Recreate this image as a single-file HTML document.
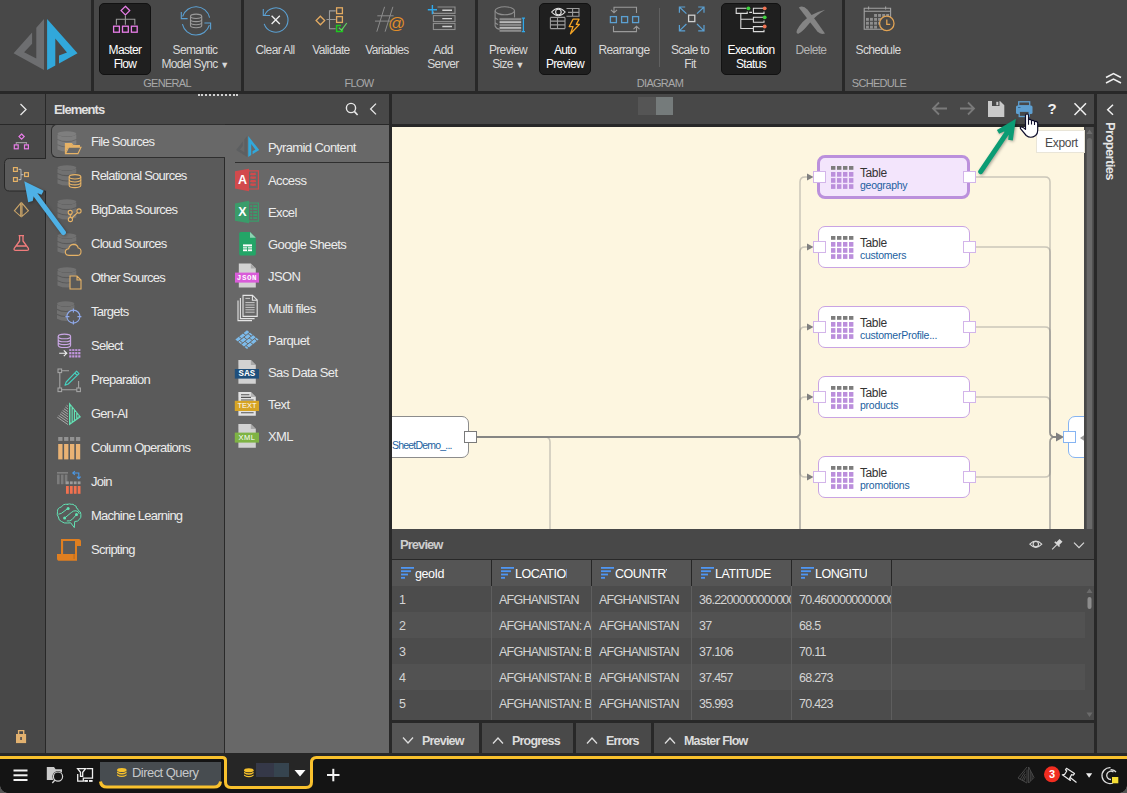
<!DOCTYPE html>
<html lang="en">
<head>
<meta charset="utf-8">
<title>Data Flow</title>
<style>
*{box-sizing:border-box;margin:0;padding:0}
html,body{width:1127px;height:793px;overflow:hidden;background:#484848}
body{font-family:"Liberation Sans",sans-serif;font-size:12px;color:#e4e4e4;position:relative}
.abs{position:absolute}
svg{position:absolute;overflow:visible}
/* ribbon */
#ribbon{position:absolute;left:0;top:0;width:1127px;height:91px;background:#484848}
#ribbon-border{position:absolute;left:0;top:91px;width:1127px;height:3px;background:#282828}
.rsep{position:absolute;top:0;width:3px;height:91px;background:#282828}
.rbtn{position:absolute;top:3px;height:72px;text-align:center;font-size:12px;line-height:14.3px;color:#d8d8d8;letter-spacing:-0.65px}
.rbtn .lbl{position:absolute;left:-20px;right:-20px;top:40px;white-space:nowrap}
.rbtn.on{background:#1f1f1f;border:1px solid #121212;border-radius:5px;color:#fff}
.rbtn.on .lbl{top:39px}
.glabel{position:absolute;top:76px;font-size:11px;line-height:14px;color:#a9a9a9;text-align:center;width:100px;letter-spacing:-0.7px}
.eitem{position:absolute;left:91px;font-size:13px;line-height:18px;color:#ececec;white-space:nowrap;letter-spacing:-0.75px}
.sitem{position:absolute;left:268px;font-size:13px;line-height:18px;color:#ececec;white-space:nowrap;letter-spacing:-0.6px}
.port{position:absolute;width:13px;height:12px;background:#fff;border:1px solid #d3b5ea}
.nt{position:absolute;margin-top:2px;font-size:12px;line-height:14px;color:#333;letter-spacing:-0.4px;white-space:nowrap}
.ns{position:absolute;margin-top:0.5px;font-size:10.5px;line-height:12px;color:#1c5fa0;letter-spacing:-0.25px;white-space:nowrap}
.gh{position:absolute;top:6px;font-size:12.5px;line-height:16px;color:#fff;white-space:nowrap;overflow:hidden;letter-spacing:-0.45px}
.gc{position:absolute;font-size:12.5px;line-height:28px;height:26px;color:#d4d4d4;white-space:nowrap;overflow:hidden;letter-spacing:-0.75px}
.tab{position:absolute;top:723px;height:30px;background:#494949;font-size:12.5px;font-weight:bold;color:#dcdcdc;letter-spacing:-0.8px}
.tab span{position:absolute;top:10px;line-height:16px;white-space:nowrap}
.lbl2{position:absolute;height:10px;line-height:10px;font-size:7.5px;font-weight:bold;color:#fff;text-align:center;font-family:"Liberation Mono",monospace}
</style>
</head>
<body>
<div id="ribbon"></div>
<div id="ribbon-border"></div>
<!-- logo -->
<svg style="left:0;top:0" width="91" height="91" viewBox="0 0 91 91">
  <polygon points="44,19.1 36.3,27.7 36.3,58.5 24.1,52.2 32.1,43.7 32.1,32.5 13.6,53.3 44,70.1" fill="#6d6e70"/>
  <polygon points="47.1,19.1 77.5,53.3 59,63.6 59,55.6 67,52.4 55.3,38.6 55.3,65.6 47.1,70.1" fill="#31a8db"/>
</svg>
<div class="rsep" style="left:91px"></div>
<div class="rsep" style="left:241px"></div>
<div class="rsep" style="left:475px"></div>
<div class="rsep" style="left:842px"></div>
<div class="abs" style="left:659px;top:8px;width:1px;height:59px;background:#606060"></div>

<div class="rbtn on" style="left:99px;width:52px"><div class="lbl">Master<br>Flow</div></div>
<div class="rbtn" style="left:160px;width:70px"><div class="lbl">Semantic<br>Model Sync <span style="font-size:9px">&#9660;</span></div></div>
<div class="rbtn" style="left:250px;width:50px"><div class="lbl">Clear All</div></div>
<div class="rbtn" style="left:306px;width:50px"><div class="lbl">Validate</div></div>
<div class="rbtn" style="left:362px;width:50px"><div class="lbl">Variables</div></div>
<div class="rbtn" style="left:418px;width:50px"><div class="lbl">Add<br>Server</div></div>
<div class="rbtn" style="left:483px;width:50px"><div class="lbl">Preview<br>Size <span style="font-size:9px">&#9660;</span></div></div>
<div class="rbtn on" style="left:539px;width:52px"><div class="lbl">Auto<br>Preview</div></div>
<div class="rbtn" style="left:599px;width:50px"><div class="lbl">Rearrange</div></div>
<div class="rbtn" style="left:665px;width:50px"><div class="lbl">Scale to<br>Fit</div></div>
<div class="rbtn on" style="left:721px;width:60px"><div class="lbl">Execution<br>Status</div></div>
<div class="rbtn" style="left:786px;width:50px;color:#b4b4b4"><div class="lbl">Delete</div></div>
<div class="rbtn" style="left:853px;width:50px"><div class="lbl">Schedule</div></div>

<div class="glabel" style="left:117px">GENERAL</div>
<div class="glabel" style="left:309px">FLOW</div>
<div class="glabel" style="left:610px">DIAGRAM</div>
<div class="glabel" style="left:829px">SCHEDULE</div>
<svg style="left:0;top:0" width="1127" height="91" fill="none" stroke-width="1.1">
<!-- master flow -->
<g stroke="#9a9a9a"><path d="M125.4 15.5 V24.8 M116.4 24.8 V19.3 H134.8 V24.8"/></g>
<g stroke="#e87de8" stroke-width="1.3"><path d="M125.4 6.3 L129.7 10.6 L125.4 14.9 L121.1 10.6 Z"/><rect x="113.6" y="26.2" width="5.8" height="6"/><rect x="122.5" y="26.2" width="5.8" height="6"/><rect x="131.4" y="26.2" width="5.8" height="6"/></g>
<!-- semantic sync -->
<g stroke="#5ba0d2"><path d="M182.6 16.5 A14 14 0 0 1 209.6 17.6"/><path d="M209.4 25.2 A14 14 0 0 1 182.4 24.2"/><path d="M181.3 12 V18.6 H187.6"/><path d="M204.4 23 H210.6 V29.6"/></g>
<g stroke="#9a9a9a"><ellipse cx="196.1" cy="16.3" rx="5.6" ry="2.2"/><path d="M190.5 16.3 V25.6 A5.6 2.2 0 0 0 201.7 25.6 V16.3"/><path d="M190.5 19.4 A5.6 2.2 0 0 0 201.7 19.4 M190.5 22.5 A5.6 2.2 0 0 0 201.7 22.5"/></g>
<!-- clear all -->
<g stroke="#5ba0d2"><path d="M264.6 15.2 A12.2 12.2 0 1 1 264.2 23.8"/><path d="M263.3 9 V15.5 H270"/></g>
<path d="M271.6 15.8 L279.8 24 M279.8 15.8 L271.6 24" stroke="#f0f0f0" stroke-width="1.3"/>
<!-- validate -->
<g stroke="#9a9a9a"><path d="M326.5 19.5 H335.7 M335.7 10.9 H329.5 V28.8 H335.7"/></g>
<g stroke="#e2aa62" stroke-width="1.3"><path d="M320.4 16.2 L324.7 20.5 L320.4 24.8 L316.1 20.5 Z"/><rect x="336.6" y="7.8" width="5.8" height="5.8"/><rect x="336.6" y="16.6" width="5.8" height="5.8"/></g>
<path d="M342.4 28 V31.4 H336.6 V25.6 H341" stroke="#1fc71f" stroke-width="1.5"/><path d="M338.8 27.8 L341.6 30.2 L346.8 23" stroke="#62cf62" stroke-width="1.2"/>
<!-- variables -->
<g stroke="#8c8c8c" stroke-width="1"><path d="M384.6 6.8 L376.8 31.7 M392.9 6.8 L385.1 31.7 M377.3 15.8 H393.6 M375 21.1 H391.3"/></g>
<!-- add server -->
<g stroke="#8e8e8e"><path d="M437.5 7 H455 V13.4 H433.4 V11.5"/><rect x="433.4" y="15.6" width="21.6" height="6"/><rect x="433.4" y="23.5" width="21.6" height="6"/></g>
<g stroke="#cfcfcf" stroke-width="1.4"><path d="M442.3 10.3 H452 M442.3 18.6 H452 M442.3 26.5 H452"/></g>
<path d="M427.8 9.7 H437 M432.4 5 V14.3" stroke="#2fa8ea" stroke-width="1.4"/>
<!-- preview size -->
<g stroke="#8e8e8e"><ellipse cx="504.8" cy="10.8" rx="9.7" ry="4"/><path d="M495.1 10.8 V26 Q496 28.6 500 29.4 M514.5 10.8 V17.5 M495.1 17.5 q1 1.5 3 2 M495.1 22.5 q1 1.5 3 2"/></g>
<rect x="499.6" y="17.8" width="21.6" height="14.2" fill="#5e5e5e"/>
<g stroke="none"><rect x="499.6" y="18.3" width="21.6" height="1.8" fill="#8c8c8c"/><rect x="499.6" y="21.2" width="21.6" height="1.8" fill="#b9b9b9"/><rect x="499.6" y="24.1" width="21.6" height="1.8" fill="#8c8c8c"/><rect x="499.6" y="27" width="21.6" height="1.8" fill="#b9b9b9"/><rect x="499.6" y="29.9" width="21.6" height="1.8" fill="#8c8c8c"/></g>
<path d="M523.4 18.2 V31.6 M521.8 18.2 H525 M521.8 31.6 H525" stroke="#2fa8ea" stroke-width="1.3"/>
<!-- auto preview -->
<g stroke="#9c9c9c"><path d="M566.5 8.5 H579 V16.3 H566.5 M572.6 8.5 V16.3 M568 12.4 H579"/><path d="M550.4 17.4 H565 M550.4 21.1 H565 M550.4 24.9 H565 M550.4 28.6 H565 M550.4 17.4 V28.6 M557.5 17.4 V28.6 M565 17.4 V28.6"/></g>
<g stroke="#e0e0e0"><path d="M551.6 12 Q558.4 4.6 565.2 12 Q558.4 19.4 551.6 12 Z" fill="#1f1f1f"/><circle cx="558.4" cy="12" r="2.8"/></g>
<path d="M573 19.2 H579 L576.3 24.4 H579.4 L570.5 33.8 L573 26.6 H569.2 Z" stroke="#f2a324" stroke-width="1.3" fill="#1f1f1f" stroke-linejoin="round"/>
<!-- rearrange -->
<g stroke="#5ba0d2" stroke-width="1.3"><rect x="610.4" y="16.6" width="6" height="6"/><rect x="621.6" y="16.6" width="6" height="6"/><rect x="632.6" y="16.6" width="6" height="6"/></g>
<g stroke="#9a9a9a"><path d="M636.5 13 V7.3 H614 V12.6 M611 9.8 L614 12.8 L617 9.8"/><path d="M613.5 26 V31.6 H636.5 V26.4 M633.5 29.2 L636.5 26.2 L639.5 29.2"/></g>
<!-- scale to fit -->
<rect x="688.6" y="15.2" width="6.2" height="6.4" stroke="#cfcfcf" stroke-width="1.3"/>
<g stroke="#5ba0d2" stroke-width="1.2"><path d="M679.4 12.8 V7 H685.2 M679.6 7.2 L686.4 13.6"/><path d="M704 12.8 V7 H698.2 M703.8 7.2 L697 13.6"/><path d="M679.4 25 V30.8 H685.2 M679.6 30.6 L686.4 24"/><path d="M704 25 V30.8 H698.2 M703.8 30.6 L697 24"/></g>
<!-- execution status -->
<g stroke="#dadada"><path d="M746.4 8.2 H736.2 V13.4 H747.2 V11.6 M749.2 12.4 H752 M763 8.2 H753.4 V13.4 H764 V11.6 M740.8 13.4 V28.5 H753.4 M740.8 19.3 H753.4 M763 17.3 H753.4 V22.3 H764 V20.6 M763 26.6 H753.4 V31.6 H764 V29.8"/></g>
<g stroke="none"><circle cx="748.4" cy="8.3" r="1.9" fill="#3ed23e"/><circle cx="764.7" cy="8.3" r="1.9" fill="#f07252"/><circle cx="764.7" cy="17.3" r="1.9" fill="#3ed23e"/><circle cx="764.7" cy="26.5" r="1.9" fill="#f07252"/></g>
<!-- delete -->
<g fill="#848484" stroke="none"><path d="M798.8 7.4 Q803 4.6 807.4 9.6 Q816 20.6 825 33.4 Q820.6 35 817.4 31.4 Q808 19.6 798.8 7.4 Z"/><path d="M825.2 9.8 Q815.6 15.6 808.4 24.4 Q802.6 31.6 798.4 33.8 Q795.6 33.8 797 30 Q802 20.6 811.6 15 Q818 11.6 825.2 9.8 Z"/></g>
<!-- schedule -->
<g stroke="#a2a2a2"><path d="M864.2 8.2 H890.6 V29.3 H864.2 Z M864.2 11.2 H890.6 M868.6 6.4 V9.6 M885.6 6.4 V9.6"/></g>
<g fill="#8e8e8e" stroke="none"><rect x="874.1" y="14.0" width="2.9" height="2.9"/><rect x="878.1" y="14.0" width="2.9" height="2.9"/><rect x="882.2" y="14.0" width="2.9" height="2.9"/><rect x="886.2" y="14.0" width="2.9" height="2.9"/><rect x="866.0" y="17.9" width="2.9" height="2.9"/><rect x="870.0" y="17.9" width="2.9" height="2.9"/><rect x="874.1" y="17.9" width="2.9" height="2.9"/><rect x="878.1" y="17.9" width="2.9" height="2.9"/><rect x="882.2" y="17.9" width="2.9" height="2.9"/><rect x="886.2" y="17.9" width="2.9" height="2.9"/><rect x="866.0" y="21.8" width="2.9" height="2.9"/><rect x="870.0" y="21.8" width="2.9" height="2.9"/><rect x="874.1" y="21.8" width="2.9" height="2.9"/><rect x="878.1" y="21.8" width="2.9" height="2.9"/><rect x="866.0" y="25.7" width="2.9" height="2.9"/><rect x="870.0" y="25.7" width="2.9" height="2.9"/><rect x="874.1" y="25.7" width="2.9" height="2.9"/></g>
<circle cx="886.8" cy="23.4" r="7.2" fill="#484848" stroke="#e0a254" stroke-width="1.3"/><path d="M886.8 19.4 V24.3 H890.2" stroke="#e0a254" stroke-width="1.3"/>
</svg>
<div class="abs" style="left:388px;top:14px;font-size:17px;line-height:20px;color:#e08d2a">@</div>
<div class="abs" style="left:198px;top:94px;width:40px;height:0;border-top:2px dotted #d4d4d4;z-index:2"></div>


<!-- LEFT STRIP -->
<div class="abs" style="left:0;top:94px;width:45px;height:659px;background:#484848"></div>
<div class="abs" style="left:45px;top:94px;width:1px;height:659px;background:#282828"></div>
<div class="abs" style="left:0;top:124px;width:46px;height:1px;background:#282828"></div>
<!-- ELEMENTS PANEL -->
<div class="abs" style="left:46px;top:94px;width:343px;height:30px;background:#484848"></div>
<div class="abs" style="left:46px;top:124px;width:343px;height:1px;background:#282828"></div>
<div class="abs" style="left:46px;top:125px;width:179px;height:628px;background:#5a5a5a"></div>
<div class="abs" style="left:224px;top:157px;width:1px;height:596px;background:#2a2a2a"></div>
<div class="abs" style="left:225px;top:125px;width:164px;height:628px;background:#686868"></div>
<div class="abs" style="left:389px;top:94px;width:3px;height:659px;background:#282828"></div>
<div class="abs" style="left:54px;top:102px;font-size:13px;line-height:16px;font-weight:bold;color:#e0e0e0;letter-spacing:-0.95px">Elements</div>
<div class="abs" style="left:51px;top:124px;width:174px;height:34px;background:#686868;border:1px solid #2f2f2f;border-right:none;border-radius:6px 0 0 6px"></div>
<div class="eitem" style="top:133px">File Sources</div>
<div class="eitem" style="top:167px">Relational Sources</div>
<div class="eitem" style="top:201px">BigData Sources</div>
<div class="eitem" style="top:235px">Cloud Sources</div>
<div class="eitem" style="top:269px">Other Sources</div>
<div class="eitem" style="top:303px">Targets</div>
<div class="eitem" style="top:337px">Select</div>
<div class="eitem" style="top:371px">Preparation</div>
<div class="eitem" style="top:405px">Gen-AI</div>
<div class="eitem" style="top:439px">Column Operations</div>
<div class="eitem" style="top:473px">Join</div>
<div class="eitem" style="top:507px">Machine Learning</div>
<div class="eitem" style="top:541px">Scripting</div>
<div class="sitem" style="top:139px">Pyramid Content</div>
<div class="sitem" style="top:172px">Access</div>
<div class="sitem" style="top:204px">Excel</div>
<div class="sitem" style="top:236px">Google Sheets</div>
<div class="sitem" style="top:268px">JSON</div>
<div class="sitem" style="top:300px">Multi files</div>
<div class="sitem" style="top:332px">Parquet</div>
<div class="sitem" style="top:364px">Sas Data Set</div>
<div class="sitem" style="top:396px">Text</div>
<div class="sitem" style="top:428px">XML</div>
<div class="abs" style="left:235px;top:162px;width:154px;height:1px;background:#2f2f2f"></div>
<svg style="left:0;top:0" width="400" height="760" fill="none" stroke-width="1.1">
<path d="M46 158.5 H9.5 Q4.5 158.5 4.5 163.5 V186 Q4.5 191 9.5 191 H46" fill="#5a5a5a" stroke="#282828" stroke-width="1"/>
<rect x="45" y="159" width="2" height="31.5" fill="#5a5a5a"/>
<path d="M20.5 104 L26 109.5 L20.5 115" stroke="#e8e8e8" stroke-width="1.3"/>
<g stroke="#9a9a9a"><path d="M16.3 144.6 V142.6 H26.5 V144.6"/></g><g stroke="#e87de8" stroke-width="1.2"><path d="M21.6 134 L24.2 136.6 L21.6 139.2 L19 136.6 Z"/><rect x="14.3" y="144.9" width="3.9" height="3.9"/><rect x="24.5" y="144.9" width="3.9" height="3.9"/></g>
<g stroke="#b0b0b0"><path d="M18.6 169.4 H20.4 Q21 169.4 21 170 V179 Q21 179.6 20.4 179.6 H18.6 M21 174.6 H23.4"/></g><g stroke="#e6b266" stroke-width="1.2"><rect x="13.5" y="167.6" width="3.8" height="3.8"/><rect x="13.5" y="177.6" width="3.8" height="3.8"/><rect x="24.6" y="172.7" width="3.8" height="3.8"/></g>
<g stroke="#caa468" stroke-width="1.1"><path d="M20.7 203.2 L14.4 210.8 L20.7 216.4 Z M22 203.2 L28.4 210.8 L22 216.4 Z"/></g>
<g stroke="#f07c7c" stroke-width="1.3" stroke-linejoin="round"><path d="M18.6 235.6 H24 M19.6 235.8 V241 L14.2 248.4 Q13.6 250.4 15.6 250.4 H27 Q29 250.4 28.4 248.4 L23 241 V235.8 M16.4 246 H26.2"/></g>
<rect x="16" y="734" width="10.1" height="9.1" fill="#e2b16f"/><path d="M18.6 734 V730.6 H23.7 V734" stroke="#e2b16f" stroke-width="1.4"/><rect x="20.3" y="737" width="1.5" height="3" fill="#40444c"/>
<circle cx="351" cy="108" r="4.6" stroke="#e8e8e8" stroke-width="1.4"/><path d="M354.3 111.4 L357.6 115" stroke="#e8e8e8" stroke-width="1.6"/><path d="M376 103.6 L370.6 109 L376 114.4" stroke="#e8e8e8" stroke-width="1.3"/>
<g fill="#7e7e7e" stroke="none"><ellipse cx="66.9" cy="133.8" rx="9.4" ry="2.6"/><path d="M57.5 134.8 q9.4 4.4 18.8 0 v4.1 q-9.4 4.4 -18.8 0 Z"/><path d="M57.5 140.1 q9.4 4.4 18.8 0 v4.1 q-9.4 4.4 -18.8 0 Z"/><path d="M57.5 145.3 q9.4 4.4 18.8 0 v4.1 q-9.4 4.4 -18.8 0 Z"/></g>
<g fill="#717171" stroke="none"><ellipse cx="66.9" cy="167.8" rx="9.4" ry="2.6"/><path d="M57.5 168.8 q9.4 4.4 18.8 0 v4.1 q-9.4 4.4 -18.8 0 Z"/><path d="M57.5 174.1 q9.4 4.4 18.8 0 v4.1 q-9.4 4.4 -18.8 0 Z"/><path d="M57.5 179.3 q9.4 4.4 18.8 0 v4.1 q-9.4 4.4 -18.8 0 Z"/></g>
<g fill="#717171" stroke="none"><ellipse cx="66.9" cy="201.8" rx="9.4" ry="2.6"/><path d="M57.5 202.8 q9.4 4.4 18.8 0 v4.1 q-9.4 4.4 -18.8 0 Z"/><path d="M57.5 208.1 q9.4 4.4 18.8 0 v4.1 q-9.4 4.4 -18.8 0 Z"/><path d="M57.5 213.3 q9.4 4.4 18.8 0 v4.1 q-9.4 4.4 -18.8 0 Z"/></g>
<g fill="#717171" stroke="none"><ellipse cx="66.9" cy="235.8" rx="9.4" ry="2.6"/><path d="M57.5 236.8 q9.4 4.4 18.8 0 v4.1 q-9.4 4.4 -18.8 0 Z"/><path d="M57.5 242.1 q9.4 4.4 18.8 0 v4.1 q-9.4 4.4 -18.8 0 Z"/><path d="M57.5 247.3 q9.4 4.4 18.8 0 v4.1 q-9.4 4.4 -18.8 0 Z"/></g>
<g fill="#717171" stroke="none"><ellipse cx="66.9" cy="269.8" rx="9.4" ry="2.6"/><path d="M57.5 270.8 q9.4 4.4 18.8 0 v4.1 q-9.4 4.4 -18.8 0 Z"/><path d="M57.5 276.1 q9.4 4.4 18.8 0 v4.1 q-9.4 4.4 -18.8 0 Z"/><path d="M57.5 281.3 q9.4 4.4 18.8 0 v4.1 q-9.4 4.4 -18.8 0 Z"/></g>
<g fill="#717171" stroke="none"><ellipse cx="65.7" cy="303.8" rx="8.7" ry="2.6"/><path d="M57.0 304.8 q8.7 4.4 17.4 0 v3.9 q-8.7 4.4 -17.4 0 Z"/><path d="M57.0 309.9 q8.7 4.4 17.4 0 v3.9 q-8.7 4.4 -17.4 0 Z"/><path d="M57.0 314.9 q8.7 4.4 17.4 0 v3.9 q-8.7 4.4 -17.4 0 Z"/></g>
<path d="M65.4 153.6 V143.6 H71.6 L73.2 145.6 H79.4 V147.3" stroke="#e6b266"/><path d="M65.6 153.6 L68.6 147.3 H81 L78 153.6 Z" stroke="#e6b266" fill="#686868"/><path d="M65.4 144 H71.5 L73 146 H79 V147 H68.3 L65.4 152.6 Z" fill="#e6b266" stroke="none"/>
<g stroke="#e6b266" fill="#5a5a5a"><path d="M69.2 176.8 V185.4 A5.8 2.2 0 0 0 80.8 185.4 V176.8"/><ellipse cx="75" cy="176.8" rx="5.8" ry="2.2"/><path d="M69.2 179.8 A5.8 2.2 0 0 0 80.8 179.8 M69.2 182.7 A5.8 2.2 0 0 0 80.8 182.7" fill="none"/></g>
<g stroke="#e6b266" fill="#5a5a5a"><path d="M70.3 217.2 V214.6 M72 218 L77.4 212.6"/><circle cx="70.2" cy="212.4" r="2"/><circle cx="79" cy="211" r="2.1"/><circle cx="70.4" cy="219.5" r="2.1"/></g>
<path d="M69 255.4 Q65.2 255.2 65.3 251.8 Q65.6 249 68.6 248.8 Q69.6 244.4 73.8 244.4 Q77.4 244.6 78.2 248 Q81.2 248.4 81 252 Q80.8 255.2 77.6 255.4 Z" stroke="#e6b266" fill="#5a5a5a"/>
<path d="M70 276 H77 L81 280 V289 H70 Z M77 276 V280 H81" stroke="#e6b266" fill="#5a5a5a"/>
<g stroke="#8fa9ea" fill="#5a5a5a"><circle cx="73.4" cy="316.6" r="6.5"/><path d="M73.4 308.6 V312.6 M73.4 320.6 V324.6 M65.4 316.6 H69.4 M77.4 316.6 H81.4" fill="none"/></g>
<g stroke="#c9a6e4"><ellipse cx="64.4" cy="336.4" rx="6.2" ry="2.3"/><path d="M58.2 336.4 V345.2 A6.2 2.3 0 0 0 70.6 345.2 V336.4 M58.2 339.4 A6.2 2.3 0 0 0 70.6 339.4 M58.2 342.3 A6.2 2.3 0 0 0 70.6 342.3"/></g><path d="M59.2 353.3 H66.6 M63.8 350.4 L66.8 353.3 L63.8 356.2" stroke="#f0f0f0" stroke-width="1.1"/><rect x="69.2" y="349.2" width="2.2" height="1.7" fill="#c597e2"/><rect x="69.2" y="352.1" width="2.2" height="2.2" fill="#c597e2"/><rect x="69.2" y="355.3" width="2.2" height="2.2" fill="#c597e2"/><rect x="72.2" y="349.2" width="2.2" height="1.7" fill="#c597e2"/><rect x="72.2" y="352.1" width="2.2" height="2.2" fill="#c597e2"/><rect x="72.2" y="355.3" width="2.2" height="2.2" fill="#c597e2"/><rect x="75.2" y="349.2" width="2.2" height="1.7" fill="#c597e2"/><rect x="75.2" y="352.1" width="2.2" height="2.2" fill="#c597e2"/><rect x="75.2" y="355.3" width="2.2" height="2.2" fill="#c597e2"/><rect x="78.2" y="349.2" width="2.2" height="1.7" fill="#c597e2"/><rect x="78.2" y="352.1" width="2.2" height="2.2" fill="#c597e2"/><rect x="78.2" y="355.3" width="2.2" height="2.2" fill="#c597e2"/>
<g stroke="#a4a4a4"><path d="M61.6 370.8 H69 M59.8 372.6 V388 M61.6 389.8 H76.8 M78.6 388 V381"/><rect x="58" y="369" width="3.6" height="3.6"/><rect x="58" y="388" width="3.6" height="3.6"/><rect x="76.8" y="388" width="3.6" height="3.6"/></g><g stroke="#45d3c2" stroke-width="1.1" stroke-linejoin="round"><path d="M76.6 371.2 L79 373.6 L68.2 384 L65 385.2 L66.2 382 Z M74.8 373 L77.2 375.4"/></g>
<path d="M57.3 417.2 L68 424.6 M58.6 415.5 L68 422.0 M60.0 413.8 L68 419.4 M61.3 412.1 L68 416.8 M62.6 410.4 L68 414.2 M63.9 408.7 L68 411.6 M65.3 407.0 L68 409.0 M66.6 405.3 L68 406.4 " stroke="#a8a8a8" stroke-width="1"/><path d="M69 402.2 L81 417 L69 425.4 Z" fill="#62e2b4" stroke="none"/><g stroke="#5a5a5a" stroke-width="1.15"><path d="M71 406.4 V422.4 M73.3 409.2 V420.8 M75.6 412 V419.2 M77.9 414.8 V417.6"/></g>
<rect x="58.2" y="437" width="4.3" height="3.9" fill="#929292"/><rect x="58.2" y="444" width="4.3" height="15.4" fill="#e9b274"/><rect x="64.1" y="437" width="4.3" height="3.9" fill="#929292"/><rect x="64.1" y="444" width="4.3" height="15.4" fill="#e9b274"/><rect x="70.0" y="437" width="4.3" height="3.9" fill="#929292"/><rect x="70.0" y="444" width="4.3" height="15.4" fill="#e9b274"/><rect x="75.9" y="437" width="4.3" height="3.9" fill="#929292"/><rect x="75.9" y="444" width="4.3" height="15.4" fill="#e9b274"/>
<rect x="57" y="472.2" width="11" height="1.3" fill="#8a8a8a"/><rect x="57.0" y="474.6" width="2.6" height="9.6" fill="#7c7c7c"/><rect x="60.9" y="474.6" width="2.6" height="9.6" fill="#7c7c7c"/><rect x="64.8" y="474.6" width="2.6" height="9.6" fill="#7c7c7c"/><rect x="66.0" y="481.4" width="2.8" height="2.8" fill="#9c9c9c"/><rect x="66.0" y="486" width="2.8" height="7.8" fill="#f2714f"/><rect x="69.9" y="481.4" width="2.8" height="2.8" fill="#9c9c9c"/><rect x="69.9" y="486" width="2.8" height="7.8" fill="#f2714f"/><rect x="73.8" y="481.4" width="2.8" height="2.8" fill="#9c9c9c"/><rect x="73.8" y="486" width="2.8" height="7.8" fill="#f2714f"/><rect x="77.7" y="481.4" width="2.8" height="2.8" fill="#9c9c9c"/><rect x="77.7" y="486" width="2.8" height="7.8" fill="#f2714f"/><path d="M73 473 H78.8 V478.4 M74.8 471.2 L72.8 473 L74.8 474.8 M77 476.6 L78.8 478.6 L80.6 476.6" stroke="#4a98e6" stroke-width="1.1"/>
<g stroke="#62e2b4" stroke-width="1" stroke-linejoin="round" stroke-linecap="round"><path d="M67.6 504.3 Q63 503.6 61.5 506.9 Q57 508 57.5 511.8 Q56.6 515 58.4 517 Q58.6 520.6 61.5 521.5 Q64 523.6 67.6 523 L70.7 522.8 L74.3 527.6 L74.7 521.5 Q78 521.6 79.1 519.7 Q81.6 517.6 80.9 514.4 Q81 511.4 78.2 510.4 Q78 508 76.5 508.2 Q76.6 505.4 74.7 505.6 Q73 503.6 71.2 504.3 Q69.4 503.4 67.6 504.3 Z"/><path d="M58.8 514.2 Q61.4 514 64 511.4 L68 508.4 M64.6 518.1 L71.2 512.6 Q73.5 510.4 76 510.8 Q78.8 511.2 79.2 513.4 M76.5 514.6 L72 519.6 Q70 521.4 67.2 521"/></g><g fill="#62e2b4"><circle cx="68.1" cy="508.4" r="1.5"/><circle cx="64.6" cy="518.1" r="1.5"/><circle cx="76.5" cy="514.6" r="1.5"/></g>
<path d="M61 539 H78.4 Q81 539 81 541.6 V546 H77 V560.8 H59.6 Q57 560.8 57 558.2 V554.1 H61 Z M63.1 541 V554 H75 V541 Z" fill="#e07f20" fill-rule="evenodd" stroke="none"/><rect x="73.7" y="554" width="0.7" height="5" fill="#a8601c"/>
</svg>
<svg style="left:0;top:0" width="400" height="460" fill="none" stroke-width="1.1">
<g transform="translate(231.2,128.2) scale(0.362,0.41)"><polygon points="44,19.1 36.3,27.7 36.3,58.5 24.1,52.2 32.1,43.7 32.1,32.5 13.6,53.3 44,70.1" fill="#5d5f61"/><polygon points="47.1,19.1 77.5,53.3 59,63.6 59,55.6 67,52.4 55.3,38.6 55.3,65.6 47.1,70.1" fill="#31a8db"/></g>
<path d="M235 171.29999999999998 L249 168.7 V191.2 L235 188.6 Z" fill="#d24a4c"/><path d="M249 170.89999999999998 H258.4 V189.0 H249" stroke="#d24a4c" stroke-width="1.2"/><g stroke="#d24a4c" stroke-width="2.3"><path d="M250.4 173.6 q2.7 1.1 5.4 0 M250.4 177.2 q2.7 1.1 5.4 0 M250.4 180.7 q2.7 1.1 5.4 0 M250.4 184.2 q2.7 1.1 5.4 0 "/></g>
<path d="M235 203.4 L249 200.8 V223.3 L235 220.70000000000002 Z" fill="#3a9c6a"/><path d="M249 203.0 H258.4 V221.10000000000002 H249" stroke="#3a9c6a" stroke-width="1.2"/><g fill="#3a9c6a" stroke="none"><rect x="250.3" y="205.1" width="1.8" height="1.9"/><rect x="253.2" y="205.1" width="3.9" height="1.9"/><rect x="250.3" y="208.1" width="1.8" height="1.9"/><rect x="253.2" y="208.1" width="3.9" height="1.9"/><rect x="250.3" y="211.1" width="1.8" height="1.9"/><rect x="253.2" y="211.1" width="3.9" height="1.9"/><rect x="250.3" y="214.1" width="1.8" height="1.9"/><rect x="253.2" y="214.1" width="3.9" height="1.9"/><rect x="250.3" y="217.1" width="1.8" height="1.9"/><rect x="253.2" y="217.1" width="3.9" height="1.9"/></g>
<path d="M239.2 233.5 Q239.2 232 240.7 232 H250 L255.8 237.8 V254 Q255.8 255.5 254.3 255.5 H240.7 Q239.2 255.5 239.2 254 Z" fill="#23a567"/><path d="M250 232 V237.8 H255.8 Z" fill="#8ed3b3"/><rect x="243" y="244.4" width="9" height="6.8" fill="#fff"/><path d="M243 246.8 H252 M243 248.9 H252 M247.5 246.8 V251.2" stroke="#23a567" stroke-width="0.9"/>
<path d="M238.8 263.4 H250.8 L255.8 268.4 V287.59999999999997 H238.8 Z" fill="#d2d2d2"/><path d="M250.8 263.4 V268.4 H255.8 Z" fill="#a8a8a8"/><rect x="235" y="272.6" width="24" height="10" fill="#d95cd9"/>
<g stroke="#e4e4e4" stroke-width="1.1"><path d="M243 295.4 H252.6 L257.2 300 V316.4 H243 Z M252.4 295.6 V300.2 H257" fill="#686868"/><path d="M240.4 298 V318.6 H254.6 M238 300.6 V320.6 H252"/></g><g stroke="#c8c8c8" stroke-width="1"><path d="M245.4 302.6 H254.6 M245.4 305 H254.6 M245.4 307.4 H254.6 M245.4 309.8 H254.6 M245.4 312.2 H254.6 M245.4 298.4 H250"/></g>
<g transform="translate(247,339.6) scale(1,0.8) rotate(45)"><rect x="-8.2" y="-8.2" width="16.4" height="16.4" fill="#7dbbea"/><g stroke="#686868" stroke-width="1"><path d="M-4.5 -9 V9 M0 -9 V9 M4.5 -9 V9 M-9 -3 H-4.5 M-9 3 H-4.5 M-4.5 -6 H0 M-4.5 0 H0 M-4.5 6 H0 M0 -3 H4.5 M0 3 H4.5 M4.5 -6 H9 M4.5 0 H9 M4.5 6 H9"/></g></g>
<path d="M238.4 360 H250.8 L255.8 365 V383.8 H238.4 Z" fill="#d2d2d2"/><path d="M250.8 360 V365 H255.8 Z" fill="#a8a8a8"/><rect x="234.8" y="369" width="24.2" height="9.6" fill="#1f4f7b"/>
<path d="M238.4 392 H250.8 L255.8 397 V415.8 H238.4 Z" fill="#e2e2e2"/><path d="M250.8 392 V397 H255.8 Z" fill="#b4b4b4"/><g stroke="#555" stroke-width="1.1"><path d="M241 394.8 H249.4 M241 397.4 H251 M241 400 H253.6 M241 412.8 H253.6"/></g><rect x="234.8" y="400.8" width="24.2" height="10.2" fill="#d6a424"/>
<path d="M238.4 424 H250.8 L255.8 429 V447.8 H238.4 Z" fill="#d2d2d2"/><path d="M250.8 424 V429 H255.8 Z" fill="#a8a8a8"/><rect x="234.8" y="432.6" width="24.2" height="10" fill="#7eb344"/>
</svg>
<div class="lbl2" style="left:235px;top:273px;width:24px;letter-spacing:0.6px">JSON</div><div class="lbl2" style="left:235px;top:369.3px;width:24px;font-size:9px;letter-spacing:0.2px">SAS</div><div class="lbl2" style="left:235px;top:401.4px;width:24px;font-size:7.5px;font-weight:normal;letter-spacing:0px;font-family:'Liberation Sans',sans-serif">TEXT</div><div class="lbl2" style="left:235px;top:433px;width:24px;font-size:7.5px;font-weight:normal;letter-spacing:0.5px;font-family:'Liberation Sans',sans-serif">XML</div><div class="abs" style="left:236px;top:171px;width:13px;text-align:center;font-size:12.5px;line-height:18px;font-weight:bold;color:#fff">A</div><div class="abs" style="left:236px;top:203px;width:13px;text-align:center;font-size:12.5px;line-height:18px;font-weight:bold;color:#fff">X</div>


<!-- CANVAS TOOLBAR -->
<div class="abs" style="left:392px;top:94px;width:702px;height:30px;background:#484848"></div>
<div class="abs" style="left:392px;top:124px;width:702px;height:3px;background:#282828;z-index:2"></div>
<svg style="left:0;top:0;z-index:3" width="1127" height="130" fill="none">
<g stroke="#7a7a7a" stroke-width="1.8"><path d="M933 108.5 H947 M939 102.5 L933 108.5 L939 114.5"/><path d="M960 108.5 H974 M968 102.5 L974 108.5 L968 114.5"/></g>
<path d="M988 101 H1000 L1004.3 105.3 V117 H988 Z" fill="#c9c9c9"/><rect x="992" y="101" width="7.5" height="5" fill="#484848"/><rect x="996.3" y="101.8" width="2" height="3.4" fill="#c9c9c9"/>
<g fill="#5e9fd0"><rect x="1016" y="105.5" width="16.5" height="8.5" rx="1.5"/><rect x="1018.7" y="101.8" width="11" height="4" fill="none" stroke="#5e9fd0" stroke-width="1.3"/><rect x="1019.2" y="111.2" width="10" height="5.3" fill="#484848" stroke="#5e9fd0" stroke-width="1.3"/></g>
<rect x="1018" y="107" width="2.5" height="1" fill="#3a6a93"/>
<g stroke="#f0f0f0" stroke-width="1.5"><path d="M1074.5 103.3 L1086 115 M1086 103.3 L1074.5 115"/></g>
<g stroke="#f0f0f0" stroke-width="1.5"><path d="M1106 77.5 L1113.5 73.5 L1121 77.5 M1106 83 L1113.5 79 L1121 83"/></g>
<path d="M1113 104.7 L1107.7 109.8 L1113 114.8" stroke="#f0f0f0" stroke-width="1.5"/>
</svg>
<div class="abs" style="left:1047px;top:100px;width:10px;font-size:15px;line-height:17px;font-weight:bold;color:#f0f0f0;text-align:center">?</div>
<div class="abs" style="left:1099px;top:122px;width:22px;height:60px;z-index:3"><div style="position:absolute;left:11px;top:0;transform-origin:0 0;transform:rotate(90deg) translate(0,-50%);font-size:13px;font-weight:bold;color:#e4e4e4;white-space:nowrap;letter-spacing:-0.65px;line-height:16px">Properties</div></div>

<div class="abs" style="left:638px;top:97px;width:18px;height:18px;background:#555"></div>
<div class="abs" style="left:656px;top:97px;width:17px;height:18px;background:#757b7b"></div>
<!-- CANVAS -->
<div id="canvas" class="abs" style="left:392px;top:126px;width:692px;height:403px;background:#fdf6e0;overflow:hidden">
<svg style="left:-392px;top:-126px" width="1127" height="793" fill="none">
<g stroke="#808080" stroke-opacity="0.4" stroke-width="1.5">
<path d="M476 437 H795 Q800 437 800 432 V182 Q800 177 805 177 H808"/>
<path d="M476 437 H795 Q800 437 800 432 V252 Q800 247 805 247 H808"/>
<path d="M476 437 H795 Q800 437 800 432 V332 Q800 327 805 327 H808"/>
<path d="M476 437 H795 Q800 437 800 432 V402 Q800 397 805 397 H808"/>
<path d="M476 437 H795 Q800 437 800 442 V472 Q800 477 805 477 H808"/>
<path d="M476 437 H795 Q800 437 800 442 V540"/>
<path d="M476 437 H795 Q800 437 800 442 V540"/>
<path d="M476 437 H545 Q550 437 550 442 V540"/>
<path d="M976 177 H1045 Q1050 177 1050 182 V432 Q1050 437 1055 437 H1058"/>
<path d="M976 247 H1045 Q1050 247 1050 252 V432 Q1050 437 1055 437 H1058"/>
<path d="M976 327 H1045 Q1050 327 1050 332 V432 Q1050 437 1055 437 H1058"/>
<path d="M976 397 H1045 Q1050 397 1050 402 V432 Q1050 437 1055 437 H1058"/>
<path d="M976 477 H1045 Q1050 477 1050 472 V442 Q1050 437 1055 437 H1058"/>
<path d="M1050 540 V442 Q1050 437 1055 437 H1058"/>
<path d="M1050 540 V442 Q1050 437 1055 437 H1058"/>
</g>
<g fill="#7f7f7f" stroke="none">
<polygon points="807,173.5 813.5,177 807,180.5"/>
<polygon points="807,243.5 813.5,247 807,250.5"/>
<polygon points="807,323.5 813.5,327 807,330.5"/>
<polygon points="807,393.5 813.5,397 807,400.5"/>
<polygon points="807,473.5 813.5,477 807,480.5"/>
<polygon points="1056,432.5 1064,437 1056,441.5"/>
</g>
</svg>
<div class="abs" style="left:-10px;top:290px;width:87px;height:42px;border:1px solid #8c8c8c;border-radius:7px;background:#fff"></div><div class="port" style="left:72px;top:305px;border-color:#7a7a7a"></div><div class="ns" style="left:0px;top:312px;letter-spacing:-0.8px">SheetDemo_...</div>
<div class="abs" style="left:425px;top:29px;width:153px;height:44px;border:3px solid #bb90dc;border-radius:8px;background:#f3e5fc"></div><div class="port" style="left:421px;top:45px"></div><div class="port" style="left:571px;top:45px"></div><svg style="left:-392px;top:-126px" width="10" height="10"><rect x="831" y="166" width="4.4" height="3.8" fill="#7d7d7d"/><rect x="831" y="172.0" width="4.4" height="4.7" fill="#bb8fdc"/><rect x="831" y="178.1" width="4.4" height="4.7" fill="#bb8fdc"/><rect x="831" y="184.2" width="4.4" height="4.7" fill="#bb8fdc"/><rect x="837" y="166" width="4.4" height="3.8" fill="#7d7d7d"/><rect x="837" y="172.0" width="4.4" height="4.7" fill="#bb8fdc"/><rect x="837" y="178.1" width="4.4" height="4.7" fill="#bb8fdc"/><rect x="837" y="184.2" width="4.4" height="4.7" fill="#bb8fdc"/><rect x="843" y="166" width="4.4" height="3.8" fill="#7d7d7d"/><rect x="843" y="172.0" width="4.4" height="4.7" fill="#bb8fdc"/><rect x="843" y="178.1" width="4.4" height="4.7" fill="#bb8fdc"/><rect x="843" y="184.2" width="4.4" height="4.7" fill="#bb8fdc"/><rect x="849" y="166" width="4.4" height="3.8" fill="#7d7d7d"/><rect x="849" y="172.0" width="4.4" height="4.7" fill="#bb8fdc"/><rect x="849" y="178.1" width="4.4" height="4.7" fill="#bb8fdc"/><rect x="849" y="184.2" width="4.4" height="4.7" fill="#bb8fdc"/></svg><div class="nt" style="left:468px;top:38px">Table</div><div class="ns" style="left:468px;top:52px">geography</div>
<div class="abs" style="left:426px;top:100px;width:152px;height:42px;border:1px solid #c9a3e3;border-radius:7px;background:#fff"></div><div class="port" style="left:421px;top:115px"></div><div class="port" style="left:571px;top:115px"></div><svg style="left:-392px;top:-126px" width="10" height="10"><rect x="831" y="236" width="4.4" height="3.8" fill="#7d7d7d"/><rect x="831" y="242.0" width="4.4" height="4.7" fill="#bb8fdc"/><rect x="831" y="248.1" width="4.4" height="4.7" fill="#bb8fdc"/><rect x="831" y="254.2" width="4.4" height="4.7" fill="#bb8fdc"/><rect x="837" y="236" width="4.4" height="3.8" fill="#7d7d7d"/><rect x="837" y="242.0" width="4.4" height="4.7" fill="#bb8fdc"/><rect x="837" y="248.1" width="4.4" height="4.7" fill="#bb8fdc"/><rect x="837" y="254.2" width="4.4" height="4.7" fill="#bb8fdc"/><rect x="843" y="236" width="4.4" height="3.8" fill="#7d7d7d"/><rect x="843" y="242.0" width="4.4" height="4.7" fill="#bb8fdc"/><rect x="843" y="248.1" width="4.4" height="4.7" fill="#bb8fdc"/><rect x="843" y="254.2" width="4.4" height="4.7" fill="#bb8fdc"/><rect x="849" y="236" width="4.4" height="3.8" fill="#7d7d7d"/><rect x="849" y="242.0" width="4.4" height="4.7" fill="#bb8fdc"/><rect x="849" y="248.1" width="4.4" height="4.7" fill="#bb8fdc"/><rect x="849" y="254.2" width="4.4" height="4.7" fill="#bb8fdc"/></svg><div class="nt" style="left:468px;top:108px">Table</div><div class="ns" style="left:468px;top:122px">customers</div>
<div class="abs" style="left:426px;top:180px;width:152px;height:42px;border:1px solid #c9a3e3;border-radius:7px;background:#fff"></div><div class="port" style="left:421px;top:195px"></div><div class="port" style="left:571px;top:195px"></div><svg style="left:-392px;top:-126px" width="10" height="10"><rect x="831" y="316" width="4.4" height="3.8" fill="#7d7d7d"/><rect x="831" y="322.0" width="4.4" height="4.7" fill="#bb8fdc"/><rect x="831" y="328.1" width="4.4" height="4.7" fill="#bb8fdc"/><rect x="831" y="334.2" width="4.4" height="4.7" fill="#bb8fdc"/><rect x="837" y="316" width="4.4" height="3.8" fill="#7d7d7d"/><rect x="837" y="322.0" width="4.4" height="4.7" fill="#bb8fdc"/><rect x="837" y="328.1" width="4.4" height="4.7" fill="#bb8fdc"/><rect x="837" y="334.2" width="4.4" height="4.7" fill="#bb8fdc"/><rect x="843" y="316" width="4.4" height="3.8" fill="#7d7d7d"/><rect x="843" y="322.0" width="4.4" height="4.7" fill="#bb8fdc"/><rect x="843" y="328.1" width="4.4" height="4.7" fill="#bb8fdc"/><rect x="843" y="334.2" width="4.4" height="4.7" fill="#bb8fdc"/><rect x="849" y="316" width="4.4" height="3.8" fill="#7d7d7d"/><rect x="849" y="322.0" width="4.4" height="4.7" fill="#bb8fdc"/><rect x="849" y="328.1" width="4.4" height="4.7" fill="#bb8fdc"/><rect x="849" y="334.2" width="4.4" height="4.7" fill="#bb8fdc"/></svg><div class="nt" style="left:468px;top:188px">Table</div><div class="ns" style="left:468px;top:202px">customerProfile...</div>
<div class="abs" style="left:426px;top:250px;width:152px;height:42px;border:1px solid #c9a3e3;border-radius:7px;background:#fff"></div><div class="port" style="left:421px;top:265px"></div><div class="port" style="left:571px;top:265px"></div><svg style="left:-392px;top:-126px" width="10" height="10"><rect x="831" y="386" width="4.4" height="3.8" fill="#7d7d7d"/><rect x="831" y="392.0" width="4.4" height="4.7" fill="#bb8fdc"/><rect x="831" y="398.1" width="4.4" height="4.7" fill="#bb8fdc"/><rect x="831" y="404.2" width="4.4" height="4.7" fill="#bb8fdc"/><rect x="837" y="386" width="4.4" height="3.8" fill="#7d7d7d"/><rect x="837" y="392.0" width="4.4" height="4.7" fill="#bb8fdc"/><rect x="837" y="398.1" width="4.4" height="4.7" fill="#bb8fdc"/><rect x="837" y="404.2" width="4.4" height="4.7" fill="#bb8fdc"/><rect x="843" y="386" width="4.4" height="3.8" fill="#7d7d7d"/><rect x="843" y="392.0" width="4.4" height="4.7" fill="#bb8fdc"/><rect x="843" y="398.1" width="4.4" height="4.7" fill="#bb8fdc"/><rect x="843" y="404.2" width="4.4" height="4.7" fill="#bb8fdc"/><rect x="849" y="386" width="4.4" height="3.8" fill="#7d7d7d"/><rect x="849" y="392.0" width="4.4" height="4.7" fill="#bb8fdc"/><rect x="849" y="398.1" width="4.4" height="4.7" fill="#bb8fdc"/><rect x="849" y="404.2" width="4.4" height="4.7" fill="#bb8fdc"/></svg><div class="nt" style="left:468px;top:258px">Table</div><div class="ns" style="left:468px;top:272px">products</div>
<div class="abs" style="left:426px;top:330px;width:152px;height:42px;border:1px solid #c9a3e3;border-radius:7px;background:#fff"></div><div class="port" style="left:421px;top:345px"></div><div class="port" style="left:571px;top:345px"></div><svg style="left:-392px;top:-126px" width="10" height="10"><rect x="831" y="466" width="4.4" height="3.8" fill="#7d7d7d"/><rect x="831" y="472.0" width="4.4" height="4.7" fill="#bb8fdc"/><rect x="831" y="478.1" width="4.4" height="4.7" fill="#bb8fdc"/><rect x="831" y="484.2" width="4.4" height="4.7" fill="#bb8fdc"/><rect x="837" y="466" width="4.4" height="3.8" fill="#7d7d7d"/><rect x="837" y="472.0" width="4.4" height="4.7" fill="#bb8fdc"/><rect x="837" y="478.1" width="4.4" height="4.7" fill="#bb8fdc"/><rect x="837" y="484.2" width="4.4" height="4.7" fill="#bb8fdc"/><rect x="843" y="466" width="4.4" height="3.8" fill="#7d7d7d"/><rect x="843" y="472.0" width="4.4" height="4.7" fill="#bb8fdc"/><rect x="843" y="478.1" width="4.4" height="4.7" fill="#bb8fdc"/><rect x="843" y="484.2" width="4.4" height="4.7" fill="#bb8fdc"/><rect x="849" y="466" width="4.4" height="3.8" fill="#7d7d7d"/><rect x="849" y="472.0" width="4.4" height="4.7" fill="#bb8fdc"/><rect x="849" y="478.1" width="4.4" height="4.7" fill="#bb8fdc"/><rect x="849" y="484.2" width="4.4" height="4.7" fill="#bb8fdc"/></svg><div class="nt" style="left:468px;top:338px">Table</div><div class="ns" style="left:468px;top:352px">promotions</div>
<div class="abs" style="left:676px;top:290px;width:40px;height:42px;border:1px solid #86b4f2;border-radius:7px;background:#fff"></div><div class="port" style="left:671px;top:305px;border-color:#86b4f2"></div><svg style="left:-392px;top:-126px" width="10" height="10"><polygon points="1080,438 1085,434.5 1085,441.5" fill="#9a9a9a"/></svg>

</div>
<div class="abs" style="left:1084px;top:127px;width:10px;height:402px;background:#484848"></div>
<div class="abs" style="left:1086px;top:127px;width:7px;height:402px;background:#525252"></div>
<div class="abs" style="left:1087px;top:138px;width:5px;height:391px;background:#696969;border-radius:3px 3px 0 0"></div>
<svg style="left:1086px;top:128px" width="7" height="8"><polygon points="3.5,1.5 6.5,6 0.5,6" fill="#6c6c6c"/></svg>
<!-- RIGHT PANEL -->
<div class="abs" style="left:1094px;top:94px;width:3px;height:659px;background:#282828"></div>
<div class="abs" style="left:1097px;top:94px;width:30px;height:659px;background:#484848"></div>
<!-- PREVIEW -->
<div class="abs" style="left:392px;top:529px;width:702px;height:30px;background:#484848"></div>
<div class="abs" style="left:392px;top:559px;width:702px;height:1px;background:#282828"></div>
<div class="abs" style="left:400px;top:537px;font-size:13px;line-height:16px;font-weight:bold;color:#cdcdcd;letter-spacing:-0.95px">Preview</div>
<svg style="left:1020px;top:531px" width="74" height="27" fill="none" stroke="#d8d8d8" stroke-width="1.1">
<path d="M9.8 13.2 Q15.8 6.8 21.8 13.2 Q15.8 19.6 9.8 13.2 Z"/><circle cx="15.8" cy="13.2" r="2.7"/>
<g transform="translate(36.6,13.8) rotate(45) scale(0.8)" stroke="none" fill="#d8d8d8"><rect x="-2.6" y="-7.8" width="5.2" height="6.6"/><rect x="-4.2" y="-2" width="8.4" height="1.9"/><rect x="-0.65" y="-0.5" width="1.3" height="8.4"/></g>
<path d="M54 11.6 L59 16.6 L64 11.6" stroke-width="1.2"/>
</svg>

<div id="grid" class="abs" style="left:392px;top:560px;width:702px;height:160px;background:#4c4c4c;overflow:hidden">
<div class="abs" style="left:0;top:0;width:702px;height:26px;background:#555"></div>
<div class="abs" style="left:0;top:26px;width:693px;height:26px;background:#4c4c4c"></div>
<div class="abs" style="left:0;top:52px;width:693px;height:26px;background:#525252"></div>
<div class="abs" style="left:0;top:78px;width:693px;height:26px;background:#4c4c4c"></div>
<div class="abs" style="left:0;top:104px;width:693px;height:26px;background:#525252"></div>
<div class="abs" style="left:0;top:130px;width:693px;height:26px;background:#4c4c4c"></div>
<svg style="left:9px;top:7px" width="13" height="12"><rect x="0" y="0" width="13" height="1.8" fill="#4f96f2"/><rect x="0" y="3.3" width="10" height="1.8" fill="#4f96f2"/><rect x="0" y="6.6" width="7" height="1.8" fill="#4f96f2"/><rect x="0" y="9.9" width="4" height="1.8" fill="#4f96f2"/></svg><div class="gh" style="left:23px;width:58px">geoId</div>
<div class="gc" style="left:7px;top:26px;width:92px">1</div><div class="gc" style="left:7px;top:52px;width:92px">2</div><div class="gc" style="left:7px;top:78px;width:92px">3</div><div class="gc" style="left:7px;top:104px;width:92px">4</div><div class="gc" style="left:7px;top:130px;width:92px">5</div>
<svg style="left:109px;top:7px" width="13" height="12"><rect x="0" y="0" width="13" height="1.8" fill="#4f96f2"/><rect x="0" y="3.3" width="10" height="1.8" fill="#4f96f2"/><rect x="0" y="6.6" width="7" height="1.8" fill="#4f96f2"/><rect x="0" y="9.9" width="4" height="1.8" fill="#4f96f2"/></svg><div class="gh" style="left:123px;width:52px">LOCATION</div>
<div class="gc" style="left:107px;top:26px;width:92px">AFGHANISTAN</div><div class="gc" style="left:107px;top:52px;width:92px">AFGHANISTAN: AB BAND</div><div class="gc" style="left:107px;top:78px;width:92px">AFGHANISTAN: BADAKHSHAN</div><div class="gc" style="left:107px;top:104px;width:92px">AFGHANISTAN: BAGHLAN</div><div class="gc" style="left:107px;top:130px;width:92px">AFGHANISTAN: BALKH</div>
<svg style="left:209px;top:7px" width="13" height="12"><rect x="0" y="0" width="13" height="1.8" fill="#4f96f2"/><rect x="0" y="3.3" width="10" height="1.8" fill="#4f96f2"/><rect x="0" y="6.6" width="7" height="1.8" fill="#4f96f2"/><rect x="0" y="9.9" width="4" height="1.8" fill="#4f96f2"/></svg><div class="gh" style="left:223px;width:52px">COUNTRY</div>
<div class="gc" style="left:207px;top:26px;width:92px">AFGHANISTAN</div><div class="gc" style="left:207px;top:52px;width:92px">AFGHANISTAN</div><div class="gc" style="left:207px;top:78px;width:92px">AFGHANISTAN</div><div class="gc" style="left:207px;top:104px;width:92px">AFGHANISTAN</div><div class="gc" style="left:207px;top:130px;width:92px">AFGHANISTAN</div>
<svg style="left:309px;top:7px" width="13" height="12"><rect x="0" y="0" width="13" height="1.8" fill="#4f96f2"/><rect x="0" y="3.3" width="10" height="1.8" fill="#4f96f2"/><rect x="0" y="6.6" width="7" height="1.8" fill="#4f96f2"/><rect x="0" y="9.9" width="4" height="1.8" fill="#4f96f2"/></svg><div class="gh" style="left:323px;width:58px">LATITUDE</div>
<div class="gc" style="left:307px;top:26px;width:92px">36.220000000000006</div><div class="gc" style="left:307px;top:52px;width:92px">37</div><div class="gc" style="left:307px;top:78px;width:92px">37.106</div><div class="gc" style="left:307px;top:104px;width:92px">37.457</div><div class="gc" style="left:307px;top:130px;width:92px">35.993</div>
<svg style="left:409px;top:7px" width="13" height="12"><rect x="0" y="0" width="13" height="1.8" fill="#4f96f2"/><rect x="0" y="3.3" width="10" height="1.8" fill="#4f96f2"/><rect x="0" y="6.6" width="7" height="1.8" fill="#4f96f2"/><rect x="0" y="9.9" width="4" height="1.8" fill="#4f96f2"/></svg><div class="gh" style="left:423px;width:52px">LONGITUDE</div>
<div class="gc" style="left:407px;top:26px;width:92px">70.46000000000001</div><div class="gc" style="left:407px;top:52px;width:92px">68.5</div><div class="gc" style="left:407px;top:78px;width:92px">70.11</div><div class="gc" style="left:407px;top:104px;width:92px">68.273</div><div class="gc" style="left:407px;top:130px;width:92px">70.423</div>
<div class="abs" style="left:99px;top:0;width:1px;height:26px;background:#262626"></div><div class="abs" style="left:99px;top:26px;width:1px;height:134px;background:#5e5e5e"></div>
<div class="abs" style="left:199px;top:0;width:1px;height:26px;background:#262626"></div><div class="abs" style="left:199px;top:26px;width:1px;height:134px;background:#5e5e5e"></div>
<div class="abs" style="left:299px;top:0;width:1px;height:26px;background:#262626"></div><div class="abs" style="left:299px;top:26px;width:1px;height:134px;background:#5e5e5e"></div>
<div class="abs" style="left:399px;top:0;width:1px;height:26px;background:#262626"></div><div class="abs" style="left:399px;top:26px;width:1px;height:134px;background:#5e5e5e"></div>
<div class="abs" style="left:499px;top:0;width:1px;height:26px;background:#262626"></div><div class="abs" style="left:499px;top:26px;width:1px;height:134px;background:#5e5e5e"></div>
<svg style="left:693px;top:26px" width="9" height="134"><polygon points="4.5,2.5 7.5,7 1.5,7" fill="#6a6a6a"/><rect x="2.5" y="11" width="4" height="12" rx="2" fill="#8c8c8c"/><polygon points="4.5,131 7.5,126.5 1.5,126.5" fill="#6a6a6a"/></svg>
</div>
<div class="abs" style="left:392px;top:720px;width:702px;height:3px;background:#282828"></div>
<div class="abs" style="left:392px;top:723px;width:702px;height:30px;background:#282828"></div>
<!-- TABS -->
<div class="tab" style="left:392px;width:87px;background:#555"><svg style="left:9px;top:13px" width="14" height="9" fill="none" stroke="#ddd" stroke-width="1.3"><path d="M2 1.5 L7 7 L12 1.5"/></svg><span style="left:30px">Preview</span></div>
<div class="tab" style="left:482px;width:91px"><svg style="left:9px;top:13px" width="14" height="9" fill="none" stroke="#ddd" stroke-width="1.3"><path d="M2 7.5 L7 2 L12 7.5"/></svg><span style="left:30px">Progress</span></div>
<div class="tab" style="left:576px;width:75px"><svg style="left:9px;top:13px" width="14" height="9" fill="none" stroke="#ddd" stroke-width="1.3"><path d="M2 7.5 L7 2 L12 7.5"/></svg><span style="left:30px">Errors</span></div>
<div class="tab" style="left:654px;width:440px"><svg style="left:9px;top:13px" width="14" height="9" fill="none" stroke="#ddd" stroke-width="1.3"><path d="M2 7.5 L7 2 L12 7.5"/></svg><span style="left:30px">Master Flow</span></div>
<!-- BOTTOM BAR -->
<div class="abs" style="left:0;top:753px;width:1127px;height:3px;background:#282828"></div>
<div class="abs" style="left:0;top:759px;width:1127px;height:34px;background:#141414"></div>
<svg style="left:0;top:750px" width="1127" height="43" fill="none">
<path d="M224 3 H313 V10 Q313 6 317 6 H313 V9 V33 Q313 39 307 39 H231 Q224 39 224 33 V9 Q224 6 220 6 H224 Z" fill="#262626" stroke="none"/>
<path d="M0 7.5 H222.5 Q225.5 7.5 225.5 10.5 V32 Q225.5 37.5 231 37.5 H306 Q311.5 37.5 311.5 32 V12.5 Q311.5 7.5 316.5 7.5 H1127" stroke="#f9c12d" stroke-width="3"/>
<path d="M100 12 H221 V30 Q221 37 214 37 H107 Q100 37 100 30 Z" fill="#474c50"/>
<path d="M100.5 31.5 Q101 37 107 37 H214 Q220 37 220.5 31.5" stroke="#f9c12d" stroke-width="3"/>
<g fill="#f2f2f2"><rect x="13.5" y="19.5" width="14" height="2"/><rect x="13.5" y="24.3" width="14" height="2"/><rect x="13.5" y="29" width="14" height="2"/></g>
<g fill="#f2f2f2"><rect x="327" y="24" width="12.5" height="2"/><rect x="332.3" y="18.8" width="2" height="12.5"/></g>
<polygon points="294.5,20 305.5,20 300,26.5" fill="#fff"/>
<rect x="256" y="13" width="18" height="14" fill="#353848"/><rect x="274" y="13" width="15" height="14" fill="#36444f"/>
</svg>
<div class="abs" style="left:132px;top:764px;font-size:13px;line-height:18px;color:#c6c8ca;letter-spacing:-0.55px;white-space:nowrap">Direct Query</div>
<div class="abs" style="left:0;top:785px;width:8px;height:8px;background:radial-gradient(circle at 100% 0,#141414 7.5px,#555 8px)"></div>
<div class="abs" style="left:1119px;top:785px;width:8px;height:8px;background:radial-gradient(circle at 0 0,#141414 7.5px,#555 8px)"></div>
<svg style="left:0;top:0" width="1127" height="793" fill="none">
<path d="M46.8 767 H54 L55.6 769.2 H62 V780 H46.8 Z" fill="#cbcbcb"/>
<circle cx="58" cy="776.6" r="5.6" fill="#141414"/><circle cx="58" cy="776.6" r="4.6" stroke="#d8d8d8" stroke-width="1.2" fill="#141414"/><path d="M54.8 780.2 L52.3 783" stroke="#d8d8d8" stroke-width="1.3"/>
<g stroke="#efefef" stroke-width="1.3"><path d="M86.5 768.6 H92.5 V778.2 H83.3 V781.2 H77.7 V774"/><path d="M77.6 768.6 H85.6 L82.7 772.3 V776.3 H80.5 V772.3 Z"/></g>
<rect x="84.3" y="780" width="3.6" height="1.9" fill="#efefef"/><rect x="89" y="780" width="3.6" height="1.9" fill="#efefef"/>
<g fill="#f5c02c"><ellipse cx="121.8" cy="770" rx="4.8" ry="2"/><path d="M117 771.4 q4.8 3 9.6 0 v1.6 q-4.8 3 -9.6 0 Z"/><path d="M117 774.2 q4.8 3 9.6 0 v1.2 q-4.8 3.2 -9.6 0 Z"/></g>
<g fill="#f5c02c"><ellipse cx="248.8" cy="770.3" rx="4.8" ry="2"/><path d="M244 771.6999999999999 q4.8 3 9.6 0 v1.6 q-4.8 3 -9.6 0 Z"/><path d="M244 774.5 q4.8 3 9.6 0 v1.2 q-4.8 3.2 -9.6 0 Z"/></g>
<!-- right icons -->
<g stroke="#4c4c4c" stroke-width="0.9"><path d="M1027 767 L1018 778 L1027 783 M1027 769.5 V782.5 M1025 771.5 L1020.2 779.3 M1025.3 774 L1022 780.2 M1025.6 776.4 L1023.6 781 M1028.6 767 V783 L1034 777.5 Z M1030.3 770.5 V781 M1032 773.5 V779.3"/></g>
<circle cx="1052" cy="774.3" r="8" fill="#f22d20"/>
<g stroke="#e8e8e8" stroke-width="1.2" stroke-linejoin="round"><path d="M1066.5 768.3 L1074.5 773.6 L1073.3 775.2 L1071.6 774.6 L1069.6 778.3 L1070.4 780.4 L1062.3 774.8 L1064.6 774.3 L1066.8 771 L1065.5 769.8 Z M1070.5 777.8 L1076.5 782.5"/></g>
<polygon points="1086,773.2 1092.2,773.2 1089.1,777.8" fill="#f0f0f0"/>
<g stroke="#dcdcdc" stroke-width="1.3"><path d="M1110.5 767.6 A8 8 0 1 0 1113 783"/><path d="M1116 772 A6 6 0 0 0 1110.5 769.8"/><path d="M1113.5 772 A4.2 4.2 0 1 0 1111 779.5"/></g>
<rect x="1112" y="777" width="6.3" height="6.3" fill="#f4dc34"/>
</svg>
<div class="abs" style="left:1046px;top:767px;width:12px;text-align:center;font-size:11px;line-height:14px;font-weight:bold;color:#fff">3</div>




<!-- OVERLAYS -->
<div class="abs" style="left:1036px;top:130px;width:49px;height:23px;background:#fff;border:1px solid #e9e5d8;font-size:12px;line-height:24px;color:#4a4a4a;padding-left:8px;letter-spacing:-0.3px;z-index:5">Export</div>
<svg style="left:0;top:0;z-index:6" width="1127" height="793" fill="none">
<g style="filter:drop-shadow(1.2px 1.6px 1.4px rgba(0,0,0,0.35))">
<path d="M980.7 171.7 L1006.4 133.6" stroke="#0b9c74" stroke-width="5" stroke-linecap="round"/>
<polygon points="1015.9,118.8 996.9,129.9 999.1,133.8 1004,131.6 1008.7,135.2 1008.1,139.7 1012.8,140.5" fill="#0b9c74"/>
</g>
<g style="filter:drop-shadow(1.2px 1.6px 1.4px rgba(0,0,0,0.3))">
<path d="M63.4 232.6 L35.6 195" stroke="#4eb1e6" stroke-width="5" stroke-linecap="round"/>
<polygon points="24.3,181.3 28.2,202.2 32.7,200.9 33.7,196.3 37.7,193.2 41.5,194.7 43.7,190.7" fill="#4eb1e6"/>
</g>
<path d="M1025.5 115.6 Q1025.5 114 1027 114 Q1028.5 114 1028.5 115.6 V119.7 Q1030 118.8 1031.5 120.1 V120.7 Q1033 119.8 1034.5 121.1 V121.7 Q1036.2 120.7 1037.7 122.6 V130.6 Q1037.7 133.8 1035.6 135.5 Q1030.6 139 1026.2 135.5 L1020.7 128.9 Q1019.6 127.2 1021.2 126.9 Q1022.8 126.8 1025.5 129.4 Z" fill="#fff" stroke="#0c0c2a" stroke-width="1.2" stroke-linejoin="round"/>
<path d="M1028.5 119.6 V124.7 M1031.5 120.6 V124.5 M1034.5 121.6 V125" stroke="#0c0c2a" stroke-width="1.1"/>
</svg>
</body>
</html>
